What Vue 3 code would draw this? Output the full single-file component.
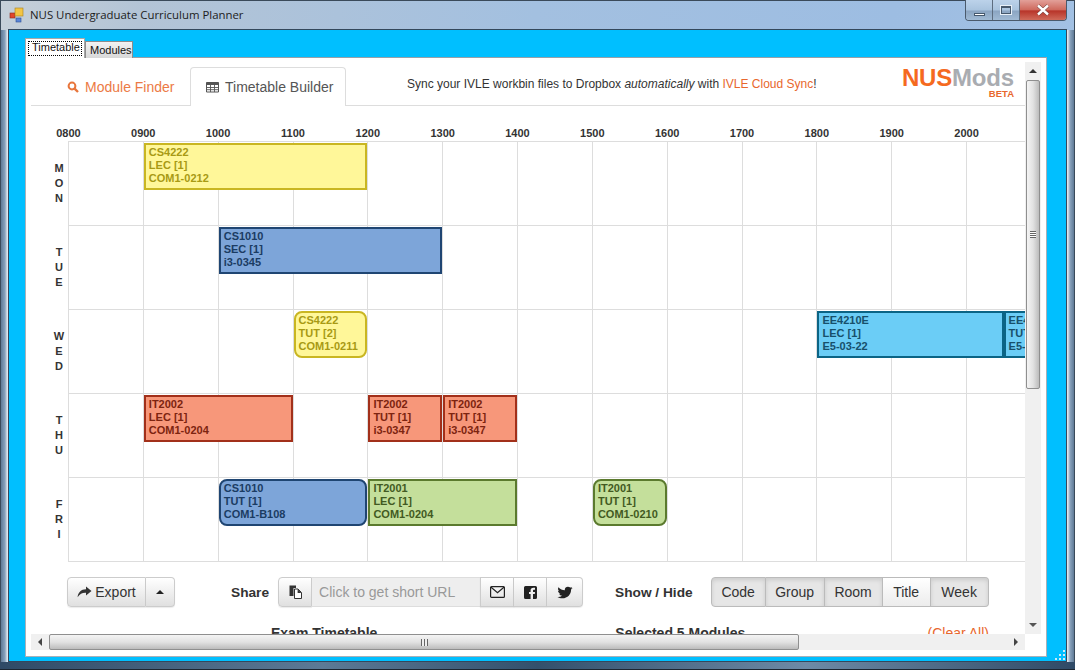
<template>
  <div class="window">
    <header class="titlebar">
      <svg class="app-icon" width="16" height="16" viewBox="0 0 16 16">
        <rect x="1" y="6" width="5" height="5" fill="#e2452c" stroke="#8a2a1a" stroke-width="0.6" />
        <rect x="6" y="1" width="8" height="8" fill="#f3c544" stroke="#a8801c" stroke-width="0.6" />
        <rect x="7" y="11" width="5" height="4" fill="#5a86d8" stroke="#2c4f94" stroke-width="0.6" />
      </svg>
      <span class="title">NUS Undergraduate Curriculum Planner</span>
      <div class="controls">
        <div class="ctl"><span class="min-glyph"></span></div>
        <div class="ctl"><span class="max-glyph"></span></div>
        <div class="ctl close">
          <svg width="14" height="12" viewBox="0 0 14 12">
            <path d="M2 1.5 L12 10.5 M12 1.5 L2 10.5" stroke="#6e3a36" stroke-width="3.6" />
            <path d="M2 1.5 L12 10.5 M12 1.5 L2 10.5" stroke="#fff" stroke-width="2.4" />
          </svg>
        </div>
      </div>
    </header>

    <div class="client">
      <div class="win-tabs">
        <div class="win-tab active"><span>Timetable</span></div>
        <div class="win-tab">Modules</div>
      </div>

      <div class="tabpage">
        <div class="browser">
          <div class="view">
            <nav class="nav">
              <a class="nav-link finder">
                <svg width="12" height="12" viewBox="0 0 12 12">
                  <circle cx="5" cy="5" r="3.4" fill="none" stroke="#e8763c" stroke-width="2" />
                  <path d="M7.6 7.6 L11 11" stroke="#e8763c" stroke-width="2.4" />
                </svg>
                Module Finder
              </a>
              <a class="nav-link builder">
                <svg width="13" height="12" viewBox="0 0 13 12">
                  <path d="M0.5 1.5 H12.5 V11 H0.5 Z" fill="none" stroke="#555" />
                  <path d="M0.5 1.5 H12.5 V4 H0.5 Z" fill="#555" />
                  <path d="M0.5 6.5 H12.5 M0.5 8.7 H12.5 M4.5 4 V11 M8.5 4 V11" stroke="#555" stroke-width="0.9" />
                </svg>
                Timetable Builder
              </a>
              <p class="promo">
                Sync your IVLE workbin files to Dropbox <em>automatically</em> with
                <span class="orange">IVLE Cloud Sync</span>!
              </p>
              <div class="logo">
                <div class="logo-name"><span class="nus">NUS</span><span class="mods">Mods</span></div>
                <div class="beta">BETA</div>
              </div>
            </nav>

            <div class="hours">
              <span v-for="h in hours" :key="h">{{ h }}</span>
            </div>

            <div class="days">
              <div v-for="d in days" :key="d.name" class="day">
                <div class="day-label">
                  <span v-for="c in d.name" :key="c">{{ c }}</span>
                </div>
                <div class="day-grid">
                  <div v-for="(h, i) in hours" :key="h" class="cell" :style="{ gridColumn: i * 2 + 1 + ' / span 2' }"></div>
                  <div
                    v-for="e in d.events"
                    :key="e.code + e.start"
                    class="event"
                    :class="[e.color, { round: e.round, flush: e.flush }]"
                    :style="{ gridColumn: e.start + 1 + ' / span ' + e.span }"
                  >
                    <div>{{ e.code }}</div>
                    <div>{{ e.group }}</div>
                    <div>{{ e.room }}</div>
                  </div>
                </div>
              </div>
            </div>

            <div class="toolbar">
              <div class="group export">
                <button class="btn export-btn">
                  <svg width="15" height="12" viewBox="0 0 15 12">
                    <path d="M9 0.5 L14.5 5 L9 9.5 V6.7 C5.5 6.5 2.8 7.6 0.6 11.3 C1 6.4 4 3.3 9 3.2 Z" fill="#333" />
                  </svg>
                  Export
                </button>
                <button class="btn caret-btn"><span class="caret"></span></button>
              </div>

              <span class="label share-label">Share</span>
              <div class="group share">
                <button class="btn icon-btn first">
                  <svg width="13" height="14" viewBox="0 0 13 14">
                    <path d="M0.5 0.5 H7 V3 H4.5 V11 H0.5 Z" fill="#333" />
                    <path d="M5.5 4 H9 L12.5 7.5 V13.5 H5.5 Z" fill="#fff" stroke="#333" />
                    <path d="M8.6 4 V8 H12.5 Z" fill="#333" />
                  </svg>
                </button>
                <div class="url">Click to get short URL</div>
                <button class="btn icon-btn mail">
                  <svg width="15" height="12" viewBox="0 0 15 12">
                    <rect x="0.6" y="0.6" width="13.8" height="10.8" rx="1" fill="none" stroke="#222" stroke-width="1.2" />
                    <path d="M0.8 1 L7.5 6.8 L14.2 1" fill="none" stroke="#222" stroke-width="1.2" />
                  </svg>
                </button>
                <button class="btn icon-btn fb">
                  <svg width="13" height="13" viewBox="0 0 13 13">
                    <path d="M1.5 0 H11.5 A1.5 1.5 0 0 1 13 1.5 V11.5 A1.5 1.5 0 0 1 11.5 13 H9 V8 H10.8 L11 6 H9 V4.8 C9 4 9.4 3.7 10 3.7 H11 V1.8 H9.4 C7.6 1.8 6.6 2.8 6.6 4.5 V6 H5 V8 H6.6 V13 H1.5 A1.5 1.5 0 0 1 0 11.5 V1.5 A1.5 1.5 0 0 1 1.5 0 Z" fill="#222" />
                  </svg>
                </button>
                <button class="btn icon-btn tw last">
                  <svg width="16" height="13" viewBox="1 3 22 19" preserveAspectRatio="none">
                    <path d="M22.46 6c-.77.35-1.6.58-2.46.69.88-.53 1.56-1.37 1.88-2.38-.83.5-1.75.85-2.72 1.05C18.37 4.5 17.26 4 16 4c-2.35 0-4.27 1.92-4.27 4.29 0 .34.04.67.11.98C8.28 9.09 5.11 7.38 3 4.79c-.37.63-.58 1.37-.58 2.15 0 1.49.75 2.81 1.91 3.56-.71 0-1.37-.2-1.95-.5v.03c0 2.08 1.48 3.82 3.44 4.21a4.22 4.22 0 0 1-1.93.07 4.28 4.28 0 0 0 4 2.98 8.521 8.521 0 0 1-5.33 1.84c-.34 0-.68-.02-1.02-.06C3.44 20.29 5.7 21 8.12 21 16 21 20.33 14.46 20.33 8.79c0-.19 0-.37-.01-.56.84-.6 1.56-1.36 2.14-2.23z" fill="#222" />
                  </svg>
                </button>
              </div>

              <span class="label show-label">Show / Hide</span>
              <div class="group toggles">
                <button
                  v-for="t in toggles"
                  :key="t.name"
                  class="btn toggle"
                  :class="{ on: t.on }"
                  :style="{ width: t.width + 'px' }"
                >{{ t.name }}</button>
              </div>
            </div>

            <div class="lower">
              <h4 class="exam">Exam Timetable</h4>
              <h4 class="selected">Selected 5 Modules</h4>
              <span class="orange clear">(Clear All)</span>
            </div>
          </div>

          <div class="vbar">
            <div class="arrow up"></div>
            <div class="vthumb"><span class="vgrip"></span></div>
            <div class="arrow down"></div>
          </div>

          <div class="hbar">
            <div class="arrow left"></div>
            <div class="hthumb"><span class="hgrip"></span></div>
            <div class="arrow right"></div>
          </div>
          <div class="corner"></div>
        </div>
      </div>

      <svg class="grip" width="11" height="11" viewBox="0 0 11 11">
        <path d="M8 0h2v2H8z M4 4h2v2H4z M8 4h2v2H8z M0 8h2v2H0z M4 8h2v2H4z M8 8h2v2H8z" fill="#cfeaf6" />
      </svg>
    </div>
  </div>
</template>

<script setup>
const hours = ['0800', '0900', '1000', '1100', '1200', '1300', '1400', '1500', '1600', '1700', '1800', '1900', '2000', '2100']

const toggles = [
  { name: 'Code', width: 55 },
  { name: 'Group', width: 59 },
  { name: 'Room', width: 58 },
  { name: 'Title', width: 48, on: true },
  { name: 'Week', width: 58 }
]

// start and span are counted in half hours from 0800
const days = [
  {
    name: 'MON',
    events: [{ code: 'CS4222', group: 'LEC [1]', room: 'COM1-0212', start: 2, span: 6, color: 'yellow' }]
  },
  {
    name: 'TUE',
    events: [{ code: 'CS1010', group: 'SEC [1]', room: 'i3-0345', start: 4, span: 6, color: 'blue' }]
  },
  {
    name: 'WED',
    events: [
      { code: 'CS4222', group: 'TUT [2]', room: 'COM1-0211', start: 6, span: 2, color: 'yellow', round: true },
      { code: 'EE4210E', group: 'LEC [1]', room: 'E5-03-22', start: 20, span: 5, color: 'cyan' },
      { code: 'EE4210E', group: 'TUT [1]', room: 'E5-03-22', start: 25, span: 2, color: 'cyan', flush: true }
    ]
  },
  {
    name: 'THU',
    events: [
      { code: 'IT2002', group: 'LEC [1]', room: 'COM1-0204', start: 2, span: 4, color: 'red' },
      { code: 'IT2002', group: 'TUT [1]', room: 'i3-0347', start: 8, span: 2, color: 'red' },
      { code: 'IT2002', group: 'TUT [1]', room: 'i3-0347', start: 10, span: 2, color: 'red' }
    ]
  },
  {
    name: 'FRI',
    events: [
      { code: 'CS1010', group: 'TUT [1]', room: 'COM1-B108', start: 4, span: 4, color: 'blue', round: true },
      { code: 'IT2001', group: 'LEC [1]', room: 'COM1-0204', start: 8, span: 4, color: 'green' },
      { code: 'IT2001', group: 'TUT [1]', room: 'COM1-0210', start: 14, span: 2, color: 'green', round: true }
    ]
  }
]
</script>

<style>
html, body { margin: 0; background: #2c3e50; }
</style>

<style scoped>
.window {
  width: 1075px;
  height: 670px;
  box-sizing: border-box;
  display: flex;
  flex-direction: column;
  padding: 0 8px 8px 8px;
  overflow: hidden;
  font-family: "Liberation Sans", Arial, sans-serif;
  background:
    linear-gradient(90deg, #2e3a48 0 1px, #5f7a96 1px, #8aa3bd 5px, #d5dfe8 7px, #e6ecf2 8px) left 30px / 8px 100% no-repeat,
    linear-gradient(270deg, #2e3a48 0 1px, #5f7a96 1px, #8aa3bd 5px, #d5dfe8 7px, #e6ecf2 8px) right 30px / 8px 100% no-repeat,
    linear-gradient(100deg, #c6d0d9 0%, #b3c4d6 12%, #a3c0e0 45%, #9dbde2 75%, #a6c3e4 100%);
  position: relative;
  box-shadow: inset 0 0 0 1px #3a4a5a;
}
.window::after {
  content: '';
  position: absolute;
  left: 0;
  right: 0;
  bottom: 0;
  height: 8px;
  border-bottom: 1px solid #1c2530;
  box-sizing: border-box;
  background: linear-gradient(90deg, #2f4a66, #5c7a96 30%, #33506c 50%, #6d8aa6 75%, #2f4a66);
}

.titlebar {
  height: 29px;
  flex: none;
  display: flex;
  align-items: flex-start;
}
.app-icon {
  margin: 7px 5px 0 1px;
}
.title {
  font-family: "Open Sans", sans-serif;
  font-size: 11.4px;
  line-height: 16px;
  margin-top: 7px;
  color: #1c1c1c;
}
.controls {
  margin-left: auto;
  display: flex;
  height: 20px;
  border: 1px solid #4a5a6c;
  border-top: none;
  border-radius: 0 0 4px 4px;
  overflow: hidden;
}
.ctl {
  width: 27px;
  box-sizing: border-box;
  display: flex;
  align-items: center;
  justify-content: center;
  background: linear-gradient(#bcd2ea 0%, #a9c3de 50%, #8ba5c2 55%, #a0bad4 100%);
  border-right: 1px solid #5d6d80;
}
.ctl.close {
  width: 46px;
  border-right: none;
  background: linear-gradient(#e2a099 0%, #cf6a5e 48%, #b8352a 55%, #cf6a5a 100%);
}
.min-glyph {
  width: 9px;
  height: 1px;
  margin-top: 8px;
  background: #fff;
  border: 1px solid #46586c;
}
.max-glyph {
  width: 8px;
  height: 5px;
  border: 1px solid #46586c;
  border-top-width: 2px;
  outline: 1px solid #e8f0f8;
}

.client {
  flex: 1;
  min-height: 0;
  display: flex;
  flex-direction: column;
  box-sizing: border-box;
  padding: 8px 19px 4px 16px;
  background: #00bfff;
  border: 1px solid #34485c;
  position: relative;
}
.grip {
  position: absolute;
  right: 0;
  bottom: 0;
}

.win-tabs {
  display: flex;
  align-items: flex-end;
  height: 20px;
  flex: none;
  font-size: 11px;
  color: #111;
  position: relative;
  z-index: 1;
  margin-bottom: -1px;
}
.win-tab {
  height: 17px;
  line-height: 16px;
  box-sizing: border-box;
  padding: 0 4px;
  width: 48px;
  background: linear-gradient(#f2f2f2, #d8d8d8);
  border: 1px solid #8c8c8c;
  border-bottom: none;
}
.win-tab.active {
  width: 60px;
  height: 20px;
  padding: 2px 2px 0;
  background: #fff;
  border-color: #a8a8a8;
  border-bottom: none;
}
.win-tab.active span {
  display: block;
  height: 15px;
  line-height: 13px;
  padding: 0 4px;
  outline: 1px dotted #000;
  outline-offset: -1px;
}

.tabpage {
  flex: 1;
  min-height: 0;
  background: #fff;
  border: 1px solid #a8b0b8;
  border-top-color: #98a0a8;
  padding: 4px 5px 6px 5px;
  display: flex;
}
.browser {
  flex: 1;
  min-width: 0;
  display: grid;
  grid-template-columns: 994px 16px;
  grid-template-rows: 572px 16px;
}

.view {
  overflow: hidden;
  background: #fff;
  color: #333;
}

.nav {
  display: flex;
  align-items: flex-start;
  height: 38px;
  margin-top: 5px;
  border-bottom: 1px solid #ddd;
  width: 994px;
}
.nav-link {
  height: 38px;
  box-sizing: border-box;
  display: flex;
  align-items: center;
  gap: 6px;
  font-size: 14px;
  white-space: nowrap;
}
.finder {
  width: 159px;
  padding: 2px 0 0 36px;
  color: #ec7a45;
}
.builder {
  width: 156px;
  height: 39px;
  padding-left: 15px;
  color: #555;
  background: #fff;
  border: 1px solid #ddd;
  border-bottom: none;
  border-radius: 4px 4px 0 0;
}
.promo {
  margin: 9px 0 0 61px;
  font-size: 12px;
  line-height: 17px;
  color: #333;
  white-space: nowrap;
}
.orange {
  color: #e8672d;
}
.logo {
  margin-left: auto;
  margin-right: 11px;
  text-align: right;
  font-weight: bold;
}
.logo-name {
  font-size: 24px;
  line-height: 22px;
  letter-spacing: -0.18px;
}
.nus {
  color: #f56a1f;
}
.mods {
  color: #a9acb1;
}
.beta {
  font-size: 9.5px;
  line-height: 8px;
  margin-top: 1px;
  color: #e8672d;
}

.hours {
  display: flex;
  margin-top: 20px;
  height: 15px;
  width: 1100px;
  font-size: 11px;
  font-weight: bold;
  line-height: 15px;
  color: #333;
}
.hours span {
  flex: 0 0 74.846px;
  text-align: center;
}

.days {
  width: 1100px;
}
.day {
  display: flex;
  height: 84px;
}
.day-label {
  width: 37px;
  flex: none;
  box-sizing: border-box;
  padding-left: 19px;
  display: flex;
  flex-direction: column;
  justify-content: center;
  align-items: center;
  font-size: 11px;
  font-weight: bold;
  line-height: 15px;
  color: #333;
}
.day-grid {
  display: grid;
  grid-template-columns: repeat(28, 37.423px);
  grid-template-rows: 84px;
  align-items: start;
}
.cell {
  grid-row: 1;
  height: 84px;
  box-sizing: border-box;
  border-left: 1px solid #ddd;
  border-top: 1px solid #ddd;
}
.day:last-child .cell {
  height: 85px;
  border-bottom: 1px solid #ddd;
}
.event {
  grid-row: 1;
  position: relative;
  margin: 2px 0 0 1px;
  height: 47px;
  box-sizing: border-box;
  padding: 1px 3px 0;
  border: 2px solid;
  font-size: 11px;
  font-weight: bold;
  line-height: 13px;
  overflow: hidden;
  white-space: nowrap;
}
.event.round {
  border-radius: 8px;
}
.event.flush {
  margin-left: 0;
}
.yellow { background: #fff799; border-color: #c9b622; color: #a89a14; }
.blue { background: #7da5d9; border-color: #1f4572; color: #1b3c63; }
.cyan { background: #6bcdf6; border-color: #0b6485; color: #17506b; }
.red { background: #f7977a; border-color: #a2301a; color: #7d2410; }
.green { background: #c4df9b; border-color: #5b7a2e; color: #425a22; }

.toolbar {
  display: flex;
  align-items: center;
  height: 30px;
  margin-top: 16px;
  padding-left: 36px;
  width: 958px;
  font-size: 14px;
}
.group {
  display: flex;
  height: 30px;
  flex: none;
}
.btn {
  height: 30px;
  margin: 0;
  padding: 0;
  box-sizing: border-box;
  display: flex;
  align-items: center;
  justify-content: center;
  font-family: inherit;
  font-size: 14px;
  color: #333;
  background: linear-gradient(#fff, #e0e0e0);
  border: 1px solid #ccc;
  border-left-width: 0;
  box-shadow: 0 1px 1px rgba(0, 0, 0, 0.08);
}
.export-btn {
  width: 79px;
  gap: 3px;
  border-left-width: 1px;
  border-radius: 4px 0 0 4px;
}
.caret-btn {
  width: 29px;
  border-radius: 0 4px 4px 0;
}
.caret {
  width: 0;
  height: 0;
  border-left: 4px solid transparent;
  border-right: 4px solid transparent;
  border-bottom: 4px solid #222;
}
.label {
  font-size: 13.7px;
  font-weight: bold;
  color: #333;
  white-space: nowrap;
}
.share-label {
  margin-left: 56px;
}
.share {
  margin-left: 9px;
}
.icon-btn {
  width: 34px;
}
.icon-btn.first {
  border-left-width: 1px;
  border-radius: 4px 0 0 4px;
}
.icon-btn.fb {
  width: 33px;
}
.icon-btn.last {
  width: 36px;
  border-radius: 0 4px 4px 0;
}
.url {
  width: 168px;
  box-sizing: border-box;
  padding-left: 7px;
  line-height: 28px;
  background: #eee;
  color: #999;
  border-top: 1px solid #ddd;
  border-bottom: 1px solid #ddd;
}
.mail {
  border-left-width: 1px;
}
.show-label {
  margin-left: 32px;
}
.toggles {
  margin-left: 18px;
}
.toggle {
  background: #e6e6e6;
  border-color: #bbb;
  box-shadow: inset 0 2px 4px rgba(0, 0, 0, 0.12);
}
.toggle:first-child {
  border-left-width: 1px;
  border-radius: 4px 0 0 4px;
}
.toggle:last-child {
  border-radius: 0 4px 4px 0;
}
.toggle.on {
  background: linear-gradient(#fff, #ececec);
  box-shadow: none;
}

.lower {
  display: flex;
  width: 958px;
  padding-left: 240px;
  box-sizing: border-box;
  margin-top: 16px;
  font-size: 14px;
  line-height: 20px;
}
.lower h4 {
  margin: 0;
  font-size: 14px;
  font-weight: bold;
  color: #333;
}
.lower .selected {
  margin-left: 238px;
}
.clear {
  margin-left: auto;
  font-size: 14px;
}

.vbar {
  background: #f0f0f0;
  display: flex;
  flex-direction: column;
  align-items: stretch;
}
.hbar {
  background: #f0f0f0;
  display: flex;
  align-items: stretch;
}
.corner {
  background: #fff;
}
.arrow {
  flex: none;
  display: flex;
  align-items: center;
  justify-content: center;
}
.arrow.up,
.arrow.down {
  height: 18px;
}
.arrow.left,
.arrow.right {
  width: 18px;
}
.arrow::before {
  content: '';
  width: 0;
  height: 0;
  border: 4px solid transparent;
}
.arrow.up::before {
  border-top-width: 0;
  border-bottom-color: #333;
}
.arrow.down {
  margin-top: auto;
}
.arrow.down::before {
  border-bottom-width: 0;
  border-top-color: #555;
}
.arrow.left::before {
  border-left-width: 0;
  border-right-color: #444;
}
.arrow.right {
  margin-left: auto;
}
.arrow.right::before {
  border-right-width: 0;
  border-left-color: #444;
}
.vthumb {
  height: 309px;
  margin: 0 1px;
  box-sizing: border-box;
  border: 1px solid #8f8f8f;
  border-radius: 2px;
  background: linear-gradient(90deg, #f4f4f4, #e2e2e2 50%, #bcbcbc);
  display: flex;
  align-items: center;
  justify-content: center;
}
.vgrip {
  width: 6px;
  height: 5px;
  border-top: 1px solid #666;
  border-bottom: 1px solid #666;
  background: linear-gradient(#fff 0 1px, #666 1px 2px, #fff 2px 3px, #666 3px 4px, #fff 4px);
}
.hthumb {
  width: 750px;
  box-sizing: border-box;
  border: 1px solid #8f8f8f;
  border-radius: 2px;
  background: linear-gradient(#f4f4f4, #e2e2e2 50%, #bcbcbc);
  display: flex;
  align-items: center;
  justify-content: center;
}
.hgrip {
  width: 7px;
  height: 7px;
  background: repeating-linear-gradient(90deg, #666 0 1px, #eee 1px 3px);
}
</style>
